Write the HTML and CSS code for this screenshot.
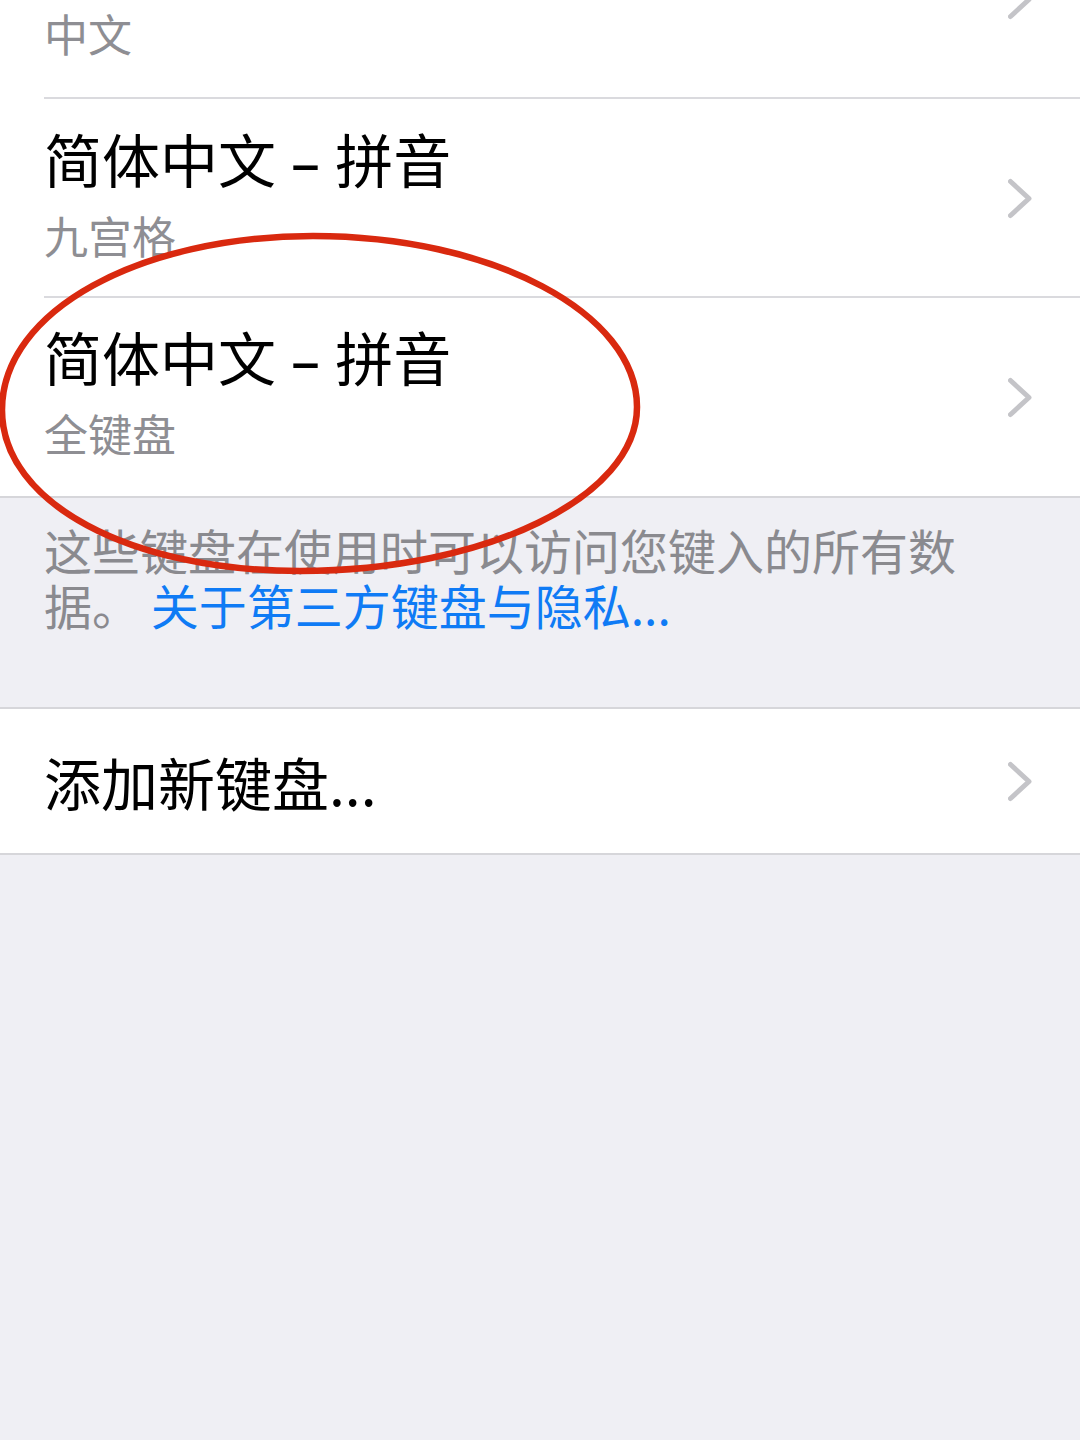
FILE: index.html
```html
<!DOCTYPE html>
<html lang="zh-CN">
<head>
<meta charset="utf-8">
<title>键盘</title>
<link rel="stylesheet" href="styles.css">
</head>
<body>
<div class="screen">
  <div class="group">
    <div class="row row-first">
      <div class="cell-text">
        <div class="subtitle">中文</div>
      </div>
      <svg class="chev chev-top" viewBox="0 0 24 41"><path d="M2.5 3.5 L21 20.5 L2.5 37.5"/></svg>
    </div>
    <div class="row">
      <div class="cell-text">
        <div class="title">简体中文<span class="dash"> – </span>拼音</div>
        <div class="subtitle">九宫格</div>
      </div>
      <svg class="chev" viewBox="0 0 24 41"><path d="M2.5 3.5 L21 20.5 L2.5 37.5"/></svg>
    </div>
    <div class="row row-last">
      <div class="cell-text">
        <div class="title">简体中文<span class="dash"> – </span>拼音</div>
        <div class="subtitle">全键盘</div>
      </div>
      <svg class="chev" viewBox="0 0 24 41"><path d="M2.5 3.5 L21 20.5 L2.5 37.5"/></svg>
    </div>
  </div>

  <div class="footer">
    <p>这些键盘在使用时可以访问您键入的所有数据。 <a class="link">关于第三方键盘与隐私...</a></p>
  </div>

  <div class="group group-add">
    <div class="row row-add">
      <div class="cell-text">
        <div class="title title-add">添加新键盘...</div>
      </div>
      <svg class="chev" viewBox="0 0 24 41"><path d="M2.5 3.5 L21 20.5 L2.5 37.5"/></svg>
    </div>
  </div>

  <svg class="annotation" viewBox="0 0 1080 1440" preserveAspectRatio="none">
    <path d="M313 236 C492 236 637 313 637 407 C637 497 486 571 300 571 C130 571 2 503 2 410 C2 310 141 236 313 236 Z"/>
  </svg>
</div>
</body>
</html>
```

FILE: styles.css
```css
* {
  box-sizing: border-box;
}

html, body {
  margin: 0;
  padding: 0;
  background: #efeff4;
}

body {
  font-family: "Noto Sans CJK SC", "Noto Sans", sans-serif;
  width: 1080px;
  height: 1440px;
  overflow: hidden;
}

.screen {
  position: relative;
  width: 1080px;
  height: 1440px;
  background: #efeff4;
}

.group {
  background: #ffffff;
  border-bottom: 2px solid #d6d6da;
}

.group-add {
  border-top: 2px solid #d6d6da;
}

.row {
  display: flex;
  align-items: center;
  height: 199px;
  padding-left: 44px;
  padding-right: 48px;
  position: relative;
}

.row::after {
  content: "";
  position: absolute;
  left: 44px;
  right: 0;
  bottom: 0;
  height: 2px;
  background: #dadade;
}

.row-last::after,
.row-add::after {
  display: none;
}

.cell-text {
  flex: 1;
  display: flex;
  flex-direction: column;
}

.row-first {
  height: 99px;
  align-items: flex-start;
}

.row-first .subtitle {
  line-height: 67px;
}

.row-last {
  height: 198px;
}

.title {
  font-size: 58px;
  line-height: 70px;
  color: #000000;
  white-space: nowrap;
}

.dash {
  font-family: "Noto Sans", sans-serif;
  white-space: pre;
}

.subtitle {
  font-size: 44px;
  line-height: 79px;
  color: #8e8e93;
  white-space: nowrap;
}

.chev {
  width: 24px;
  height: 41px;
  flex: none;
  fill: none;
  stroke: #c4c4c8;
  stroke-width: 5;
  stroke-linecap: round;
  stroke-linejoin: round;
}

.chev-top {
  margin-top: -21px;
}

.footer {
  padding: 24px 96px 75px 44px;
}

.footer p {
  margin: 0;
  font-size: 48px;
  line-height: 55px;
  color: #8a8a8f;
}

.link {
  display: inline-block;
  line-height: 55px;
  color: #0f7bf5;
  text-decoration: none;
}

.row-add {
  height: 144px;
}

.title-add {
  font-size: 57px;
  line-height: 70px;
}

.annotation {
  position: absolute;
  left: 0;
  top: 0;
  width: 1080px;
  height: 1440px;
  pointer-events: none;
}

.annotation path {
  fill: none;
  stroke: #d9290f;
  stroke-width: 6.5;
}
```
